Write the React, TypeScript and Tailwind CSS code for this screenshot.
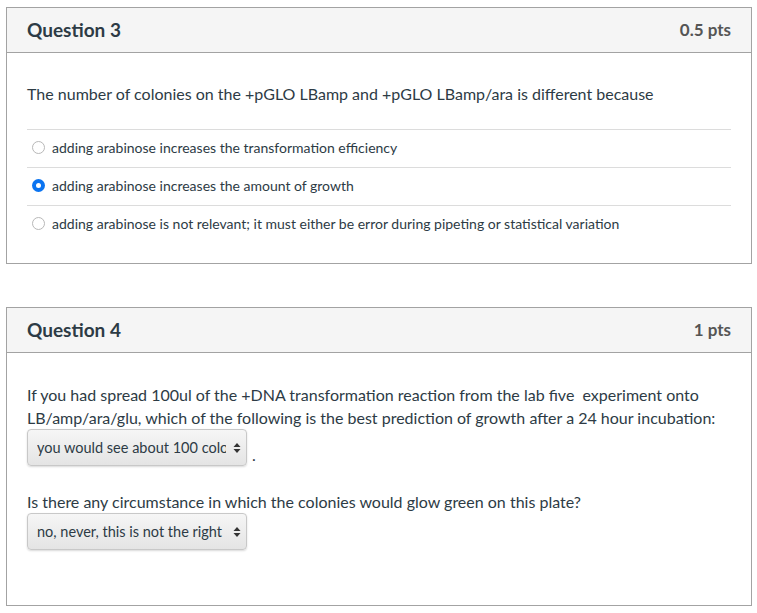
import React from 'react'

const font = { fontFamily: 'Lato, "Noto Sans", sans-serif' }

const Radio = ({ checked }: { checked?: boolean }) =>
  checked ? (
    <span className="w-[13px] h-[13px] rounded-full bg-[#0b74f1] flex items-center justify-center shrink-0">
      <span className="w-[5px] h-[5px] rounded-full bg-white" />
    </span>
  ) : (
    <span className="w-[13px] h-[13px] rounded-full border border-[#b8b8b8] bg-white shrink-0" />
  )

const SelectBox = ({ value }: { value: string }) => (
  <div className="w-[220px] h-[37px] rounded-[4px] border border-[#c8c8c8] bg-gradient-to-b from-[#f6f6f6] to-[#e4e4e4] shadow-[0_1px_2px_rgba(0,0,0,0.15)] flex items-center pl-[9px] pr-[5px]">
    <span className="flex-1 overflow-hidden whitespace-nowrap text-[14.5px] text-[#2d3b45]">{value}</span>
    <svg width="8" height="12" viewBox="0 0 8 12" className="ml-[7px] shrink-0">
      <path d="M4 1 L7.5 5 L0.5 5 Z" fill="#333" />
      <path d="M4 11 L7.5 7 L0.5 7 Z" fill="#333" />
    </svg>
  </div>
)

const Card = ({ title, pts, children }: { title: string; pts: string; children: React.ReactNode }) => (
  <div className="border border-[#a3a3a3] bg-white">
    <div className="h-[45px] bg-[#f5f5f5] border-b border-[#a3a3a3] flex items-center justify-between px-[20px]">
      <h2 className="text-[19px] font-bold text-[#2d3b45]">{title}</h2>
      <span className="text-[17px] font-bold text-[#555]">{pts}</span>
    </div>
    {children}
  </div>
)

export default function App() {
  const options = [
    { text: 'adding arabinose increases the transformation efficiency', checked: false },
    { text: 'adding arabinose increases the amount of growth', checked: true },
    { text: 'adding arabinose is not relevant; it must either be error during pipeting or statistical variation', checked: false },
  ]

  return (
    <div className="bg-white min-h-[613px] pt-[7px] pl-[6px] pr-[5px] text-[#2d3b45]" style={font}>
      <Card title="Question 3" pts="0.5 pts">
        <div className="px-[20px] pt-[29px] pb-[20px]">
          <p className="text-[16px] leading-[23px]">
            The number of colonies on the +pGLO LBamp and +pGLO LBamp/ara is different because
          </p>
          <div className="mt-[24px]">
            {options.map((o, i) => (
              <div key={i} className="h-[38px] border-t border-[#dcdcdc] flex items-center gap-[7px] pl-[5px] pb-[2px]">
                <Radio checked={o.checked} />
                <span className="text-[14px]">{o.text}</span>
              </div>
            ))}
          </div>
        </div>
      </Card>

      <div className="h-[43px]" />

      <Card title="Question 4" pts="1 pts">
        <div className="px-[20px] pt-[30px] pb-[55px]">
          <p className="text-[16px] leading-[23px]">
            If you had spread 100ul of the +DNA transformation reaction from the lab five&nbsp; experiment onto
            LB/amp/ara/glu, which of the following is the best prediction of growth after a 24 hour incubation:
          </p>
          <div className="flex items-end gap-[5px]">
            <SelectBox value="you would see about 100 colonies" />
            <span className="text-[16px] leading-[22px]">.</span>
          </div>
          <p className="text-[16px] leading-[23px] mt-[24px]">
            Is there any circumstance in which the colonies would glow green on this plate?
          </p>
          <div>
            <SelectBox value="no, never, this is not the right plate" />
          </div>
        </div>
      </Card>
    </div>
  )
}
